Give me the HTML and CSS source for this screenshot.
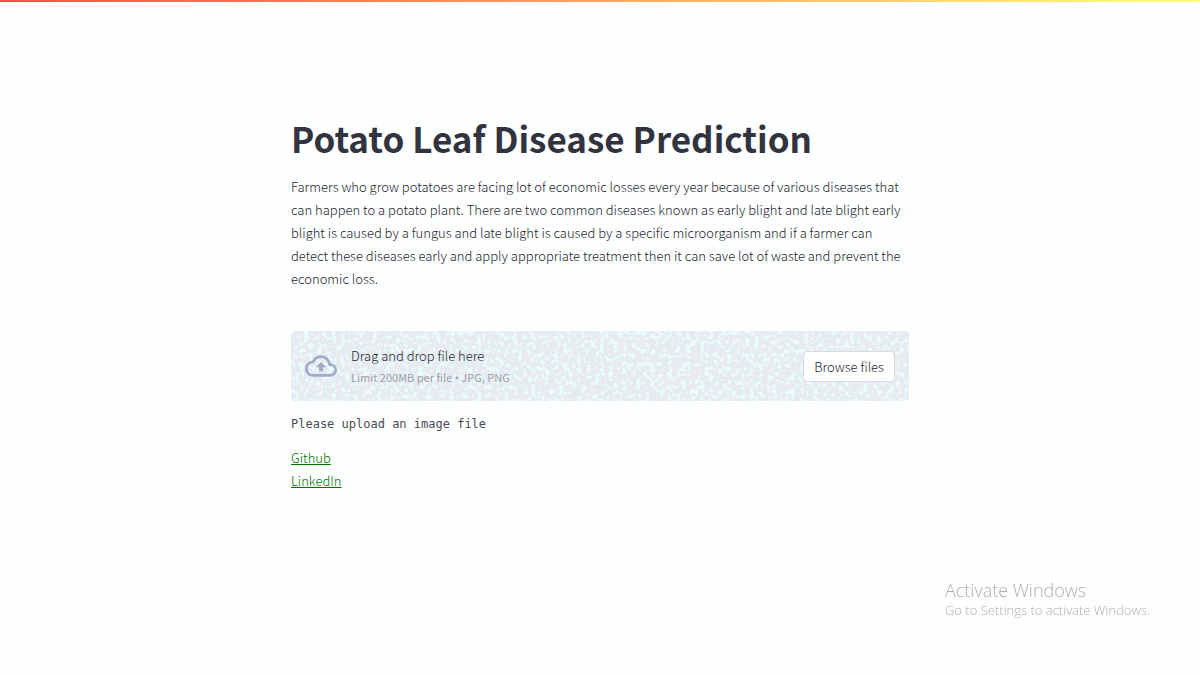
FILE: index.html
```html
<!DOCTYPE html>
<html lang="en">
<head>
<meta charset="utf-8">
<meta name="viewport" content="width=device-width, initial-scale=1">
<title>Potato Leaf Disease Prediction</title>
<link rel="stylesheet" href="styles.css">
</head>
<body>
<div class="top-stripe"></div>
<main class="content">
  <h1 class="title">Potato Leaf Disease Prediction</h1>
  <p class="intro">Farmers who grow potatoes are facing lot of economic losses every year because of various diseases that can happen to a potato plant. There are two common diseases known as early blight and late blight early blight is caused by a fungus and late blight is caused by a specific microorganism and if a farmer can detect these diseases early and apply appropriate treatment then it can save lot of waste and prevent the economic loss.</p>
  <section class="dropzone">
    <svg class="speckle" aria-hidden="true">
      <filter id="speckle" x="0" y="0" width="100%" height="100%" color-interpolation-filters="sRGB">
        <feTurbulence type="fractalNoise" baseFrequency="0.22" numOctaves="2" seed="4"/>
        <feColorMatrix values="0 0 0 0 0.91  0 0 0 0 0.99  0 0 0 0 0.99  14 0 0 0 -7.4"/>
      </filter>
      <rect width="100%" height="100%" filter="url(#speckle)"/>
    </svg>
    <svg class="cloud" viewBox="0 0 24 24" aria-hidden="true">
      <path fill="currentColor" d="M19.35 10.04A7.49 7.49 0 0 0 12 4C9.11 4 6.6 5.64 5.35 8.04A5.994 5.994 0 0 0 0 14c0 3.31 2.69 6 6 6h13c2.76 0 5-2.24 5-5 0-2.64-2.05-4.78-4.65-4.96zM19 18H6c-2.21 0-4-1.79-4-4 0-2.05 1.53-3.76 3.56-3.97l1.07-.11.5-.95A5.469 5.469 0 0 1 12 6c2.62 0 4.88 1.86 5.39 4.43l.3 1.5 1.53.11A2.98 2.98 0 0 1 22 15c0 1.65-1.35 3-3 3zM8 13h2.55v3h2.9v-3H16l-4-4z"/>
    </svg>
    <div class="instructions">
      <label class="prompt" for="leaf-image">Drag and drop file here</label>
      <span class="limit">Limit 200MB per file <span class="bullet">•</span> JPG, PNG</span>
    </div>
    <input class="file-input" id="leaf-image" type="file" accept=".jpg,.png" hidden>
    <button class="browse" type="button">Browse files</button>
  </section>
  <p class="status">Please upload an image file</p>
  <nav class="links">
    <a href="#github">Github</a>
    <a href="#linkedin">LinkedIn</a>
  </nav>
</main>
<aside class="watermark">
  <div class="watermark-title">Activate Windows</div>
  <div>Go to Settings to activate Windows.</div>
</aside>
</body>
</html>
```
FILE: styles.css
```css
* {
  box-sizing: border-box;
}

body {
  margin: 0;
  background: #fdfefe;
  color: #24252e;
  font-family: "Noto Sans CJK SC", "Open Sans", sans-serif;
  font-size: 13px;
  font-weight: 300;
  line-height: 23px;
}

.top-stripe {
  height: 2px;
  background: linear-gradient(90deg, #ff4b4b, #fffd80);
}

.content {
  max-width: 650px;
  margin: 0 auto;
  padding: 112px 16px 64px;
}

.title {
  margin: 0 0 14px;
  color: #31333f;
  font-size: 35px;
  font-weight: 700;
  line-height: 47px;
}

.intro {
  margin: 0 0 41px;
}

.dropzone {
  position: relative;
  display: flex;
  align-items: center;
  gap: 14px;
  padding: 13px 14px;
  border-radius: 4px;
  background: #e7eaf1;
  overflow: hidden;
}

.speckle {
  position: absolute;
  inset: 0;
  width: 100%;
  height: 100%;
}

.cloud {
  position: relative;
  flex: none;
  width: 32px;
  height: 32px;
  color: #a0abca;
}

.instructions {
  position: relative;
  display: flex;
  flex: 1;
  flex-direction: column;
}

.limit {
  color: #9c9fa8;
  font-size: 11px;
  font-weight: 400;
  line-height: 20px;
}

.bullet {
  font-family: "Open Sans", sans-serif;
}

.browse {
  position: relative;
  padding: 3px 10px;
  border: 1px solid #d9dbe2;
  border-radius: 4px;
  background: #fff;
  color: inherit;
  font: inherit;
}

.status {
  margin: 13px 0 12px;
  color: #4b4c55;
  font-family: "DejaVu Sans Mono", monospace;
  font-size: 12px;
  font-weight: 400;
  line-height: 20px;
}

.links {
  display: flex;
  flex-direction: column;
  align-items: flex-start;
}

.links a {
  color: #007300;
}

.watermark {
  position: fixed;
  right: 50px;
  bottom: 56px;
  color: #adaeb0;
  font-family: "Open Sans", sans-serif;
  font-size: 13px;
  line-height: 18px;
}

.watermark-title {
  font-size: 18px;
  line-height: 22px;
}
```
